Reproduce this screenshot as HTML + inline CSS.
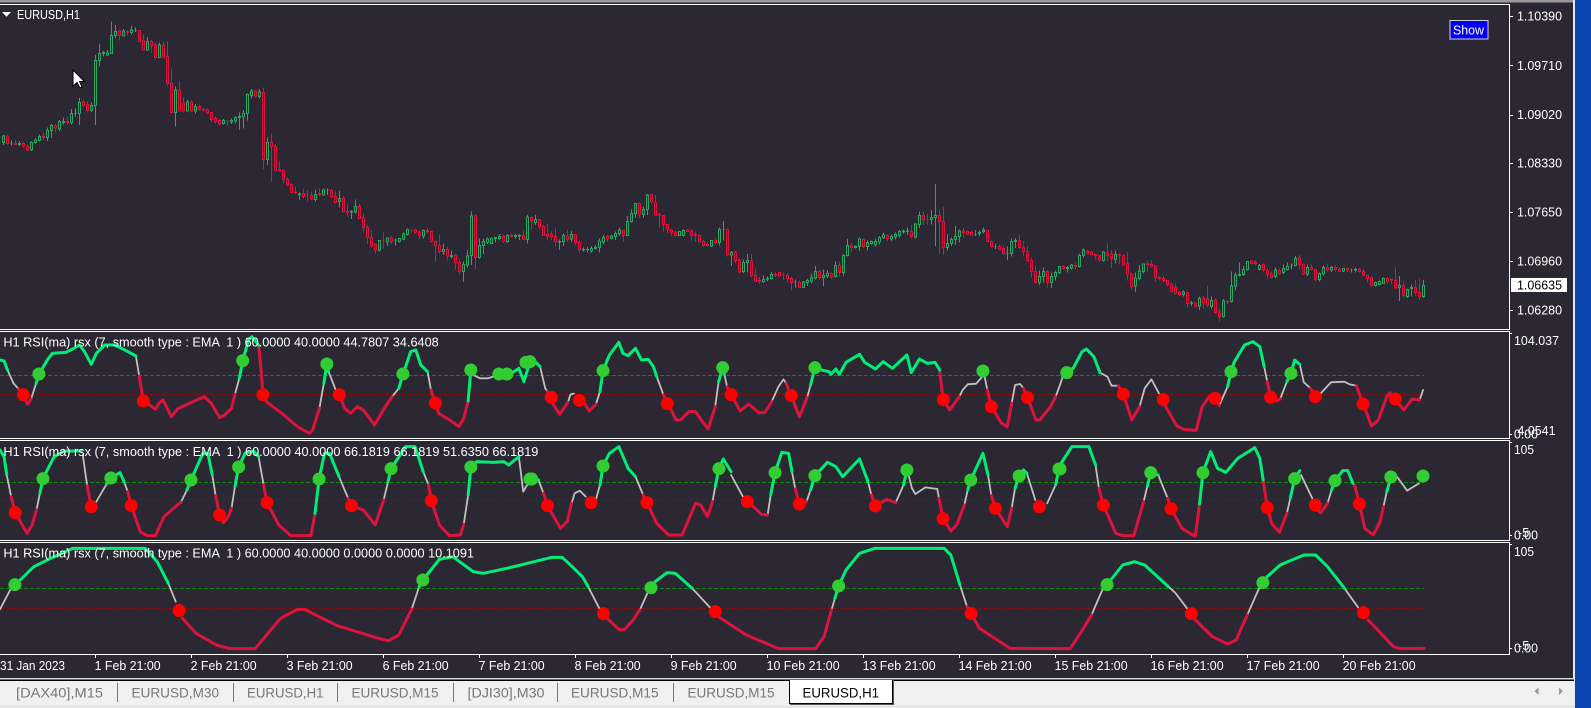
<!DOCTYPE html>
<html><head><meta charset="utf-8"><title>EURUSD,H1</title>
<style>
html,body{margin:0;padding:0;background:#2b2733;width:1591px;height:708px;overflow:hidden}
svg{display:block;position:absolute;left:0;top:0}
text{font-family:"Liberation Sans",sans-serif;font-size:12.6px;fill:#fff;white-space:pre}
.c path{fill:none;vector-effect:non-scaling-stroke;stroke-width:1;shape-rendering:crispEdges}
.G{stroke:#2ea663}.R{stroke:#e0103c}.B{stroke:#00e000}
.l path{fill:none;vector-effect:non-scaling-stroke;stroke-linejoin:round;stroke-linecap:round}
.l .g{stroke:#00ee76;stroke-width:3}
.l .r{stroke:#dc143c;stroke-width:3}
.l .w{stroke:#c0c0c0;stroke-width:1.8}
.l .dg{stroke:#32cd32;stroke-width:13}
.l .dr{stroke:#ff0000;stroke-width:13}
.t text{fill:#777;font-size:14px}
</style></head><body>
<svg width="1591" height="708" viewBox="0 0 1591 708" xmlns="http://www.w3.org/2000/svg">
<rect x="0" y="0" width="1591" height="708" fill="#2b2733"/>
<rect x="0" y="0" width="1574" height="2.5" fill="#9a9a9a"/>
<rect x="1574" y="0" width="17" height="708" fill="#0a47b2"/>
<rect x="1573" y="0" width="2" height="708" fill="#e8e8e8"/>

<!-- levels -->
<g stroke-width="1" shape-rendering="crispEdges" stroke-dasharray="4 2">
<path d="M0 375.5H1424M0 482.5H1424M0 588.5H1424" stroke="#0a8a0a"/>
<path d="M0 394.5H1424M0 499.5H1424M0 608.5H1424" stroke="#8b0a0a"/>
</g>

<!-- candles -->
<g class="c" transform="translate(3.5,0) scale(4,.33333)">
<path class="G" d="M0 405V408h-.25V428h.5V408H0M0 428V435M4 423V430h-.25V433h.5V430H4M4 433V438M7 425V428h-.25V450h.5V428H7M7 450V453M8 415V420h-.25V428h.5V420H8M8 428V430M9 403V409h-.25V422h.5V409H9M9 422V424M11 382V391h-.25V413h.5V391H11M11 413V423M12 372V376h-.25V391h.5V376H12M12 391V414M14 360V364h-.25V387h.5V364H14M14 387V393M15 353V365h-.25V368h.5V365H15M15 368V374M17 327V340h-.25V367h.5V340H17M17 367V374M19 294V307h-.25V340h.5V307H19M19 340V375M22 307V316h-.25V332h.5V316H22M22 332V336M23 165V181h-.25V316h.5V181H23M23 316V375M24 132V160h-.25V181h.5V160H24M24 181V200M25 153V157h-.25V160h.5V157H25M25 160V170M26 150V159h-.25V165h.5V159H26M26 165V168M27 64V106h-.25V160h.5V106H27M27 160V162M28 75V95h-.25V107h.5V95H28M28 107V116M30 87V93h-.25V108h.5V93H30M30 108V110M32 78V90h-.25V98h.5V90H32M32 98V103M33 82V91h-.25V91h.5V91H33M33 91V96M36 111V124h-.25V150h.5V124H36M36 150V153M39 127V135h-.25V173h.5V135H39M39 173V174M43 260V270h-.25V338h.5V270H43M43 338V380M46 298V306h-.25V333h.5V306H46M46 333V335M48 312V319h-.25V333h.5V319H48M48 333V340M55 357V361h-.25V371h.5V361H55M55 371V373M57 355V362h-.25V366h.5V362H57M57 366V372M58 350V353h-.25V363h.5V353H58M58 363V370M59 337V350h-.25V352h.5V350H59M59 352V390M60 330V341h-.25V351h.5V341H60M60 351V385M61 280V284h-.25V340h.5V284H61M61 340V362M62 267V273h-.25V286h.5V273H62M62 286V296M64 267V276h-.25V290h.5V276H64M64 290V296M66 412V428h-.25V478h.5V428H66M66 478V495M74 577V582h-.25V584h.5V582H74M74 584V600M78 568V584h-.25V598h.5V584H78M78 598V604M80 565V570h-.25V585h.5V570H80M80 585V587M81 565V570h-.25V570h.5V570H81M81 570V585M84 573V595h-.25V605h.5V595H84M84 605V622M87 630V634h-.25V636h.5V634H87M87 636V657M88 598V620h-.25V636h.5V620H88M88 636V640M94 720V722h-.25V750h.5V722H94M94 750V755M96 712V714h-.25V726h.5V714H96M96 726V738M99 715V716h-.25V724h.5V716H99M99 724V728M100 698V702h-.25V717h.5V702H100M100 717V720M101 685V688h-.25V703h.5V688H101M101 703V707M105 688V692h-.25V708h.5V692H105M105 708V715M110 730V748h-.25V755h.5V748H110M110 755V765M112 752V766h-.25V770h.5V766H112M112 770V775M115 785V794h-.25V815h.5V794H115M115 815V846M116 750V768h-.25V795h.5V768H116M116 795V802M117 634V648h-.25V767h.5V648H117M117 767V795M119 715V737h-.25V773h.5V737H119M119 773V776M120 715V725h-.25V736h.5V725H120M120 736V762M121 712V717h-.25V727h.5V717H121M121 727V732M122 713V715h-.25V730h.5V715H122M122 730V732M123 711V713h-.25V715h.5V713H123M123 715V728M124 702V710h-.25V715h.5V710H124M124 715V720M126 704V707h-.25V725h.5V707H126M126 725V729M128 702V706h-.25V709h.5V706H128M128 709V716M129 702V706h-.25V708h.5V706H129M129 708V720M131 645V651h-.25V718h.5V651H131M131 718V730"/>
<path class="R" d="M1 405V408h-.25V431h.5V408H1M1 431V433M3 420V431h-.25V433h.5V431H3M3 433V435M5 425V430h-.25V440h.5V430H5M5 440V443M6 433V440h-.25V450h.5V440H6M6 450V453M10 396V409h-.25V413h.5V409H10M10 413V422M13 372V376h-.25V384h.5V376H13M13 384V396M16 350V365h-.25V368h.5V365H16M16 368V373M20 298V306h-.25V317h.5V306H20M20 317V322M21 305V313h-.25V332h.5V313H21M21 332V338M29 88V93h-.25V107h.5V93H29M29 107V122M31 90V94h-.25V98h.5V94H31M31 98V105M34 90V91h-.25V124h.5V91H34M34 124V125M35 103V121h-.25V150h.5V121H35M35 150V152M37 120V124h-.25V136h.5V124H37M37 136V158M38 128V135h-.25V173h.5V135H38M38 173V176M40 124V136h-.25V171h.5V136H40M40 171V175M41 124V169h-.25V250h.5V169H41M41 250V258M42 205V250h-.25V338h.5V250H42M42 338V340M44 243V270h-.25V333h.5V270H44M44 333V335M45 292V309h-.25V333h.5V309H45M45 333V338M47 300V306h-.25V333h.5V306H47M47 333V338M49 313V320h-.25V328h.5V320H49M49 328V332M50 322V328h-.25V330h.5V328H50M50 330V335M51 325V330h-.25V339h.5V330H51M51 339V342M52 336V338h-.25V358h.5V338H52M52 358V366M53 350V355h-.25V364h.5V355H53M53 364V370M54 357V361h-.25V372h.5V361H54M54 372V375M56 360V365h-.25V365h.5V365H56M56 365V378M63 270V273h-.25V288h.5V273H63M63 288V292M65 262V277h-.25V478h.5V277H65M65 478V507M67 400V427h-.25V440h.5V427H67M67 440V545M68 432V440h-.25V510h.5V440H68M68 510V514M69 483V508h-.25V513h.5V508H69M69 513V515M70 511V512h-.25V539h.5V512H70M70 539V550M71 533V538h-.25V555h.5V538H71M71 555V558M72 550V554h-.25V577h.5V554H72M72 577V579M73 560V576h-.25V578h.5V576H73M73 578V582M75 565V580h-.25V590h.5V580H75M75 590V596M76 572V585h-.25V585h.5V585H76M76 585V605M77 575V586h-.25V597h.5V586H77M77 597V600M79 564V580h-.25V584h.5V580H79M79 584V590M82 567V571h-.25V591h.5V571H82M82 591V593M83 573V589h-.25V608h.5V589H83M83 608V610M85 588V594h-.25V635h.5V594H85M85 635V638M86 610V634h-.25V637h.5V634H86M86 637V650M89 610V620h-.25V655h.5V620H89M89 655V657M90 640V653h-.25V682h.5V653H90M90 682V696M91 675V683h-.25V712h.5V683H91M91 712V732M92 690V712h-.25V738h.5V712H92M92 738V742M93 730V733h-.25V750h.5V733H93M93 750V760M95 697V722h-.25V722h.5V722H95M95 722V745M97 710V714h-.25V724h.5V714H97M97 724V732M102 687V690h-.25V690h.5V690H102M102 690V700M103 686V690h-.25V698h.5V690H103M103 698V702M104 693V696h-.25V708h.5V696H104M104 708V717M106 684V692h-.25V694h.5V692H106M106 694V702M107 691V694h-.25V725h.5V694H107M107 725V728M108 722V724h-.25V737h.5V724H108M108 737V785M109 703V737h-.25V754h.5V737H109M109 754V760M111 740V748h-.25V768h.5V748H111M111 768V782M113 762V766h-.25V788h.5V766H113M113 788V808M114 778V788h-.25V815h.5V788H114M114 815V822M118 642V648h-.25V773h.5V648H118M118 773V807M125 704V708h-.25V725h.5V708H125M125 725V729M127 702V706h-.25V710h.5V706H127M127 710V713M130 692V706h-.25V718h.5V706H130M130 718V720"/>
<path class="B" d="M2 422V436M1.75 429h.5M18 325V350M17.75 340h.5M98 716V736M97.75 720h.5"/>
</g>
<g class="c" transform="translate(531.5,150) scale(4,.33333)">
<path class="G" d="M1 195V208h-.25V217h.5V208H1M1 217V225M7 268V275h-.25V276h.5V275H7M7 276V300M8 250V256h-.25V275h.5V256H8M8 275V288M10 243V253h-.25V267h.5V253H10M10 267V276M13 293V298h-.25V300h.5V298H13M13 300V305M14 291V298h-.25V299h.5V298H14M14 299V308M15 288V295h-.25V303h.5V295H15M15 303V308M16 285V293h-.25V296h.5V293H16M16 296V298M17 265V273h-.25V292h.5V273H17M17 292V308M18 255V262h-.25V276h.5V262H18M18 276V284M20 255V258h-.25V265h.5V258H20M20 265V268M21 245V250h-.25V260h.5V250H21M21 260V270M22 232V240h-.25V250h.5V240H22M22 250V258M24 198V214h-.25V257h.5V214H24M24 257V258M25 178V190h-.25V215h.5V190H25M25 215V218M26 159V160h-.25V190h.5V160H26M26 190V204M28 170V178h-.25V193h.5V178H28M28 193V204M29 132V135h-.25V178h.5V135H29M29 178V195M37 244V245h-.25V256h.5V245H37M37 256V258M38 238V241h-.25V257h.5V241H38M38 257V259M45 270V271h-.25V288h.5V271H45M45 288V291M47 232V238h-.25V277h.5V238H47M47 277V287M48 213V238h-.25V238h.5V238H48M48 238V272M50 303V307h-.25V315h.5V307H50M50 315V348M53 328V337h-.25V365h.5V337H53M53 365V369M54 312V332h-.25V338h.5V332H54M54 338V368M58 377V388h-.25V395h.5V388H58M58 395V399M59 380V385h-.25V387h.5V385H59M59 387V395M60 366V373h-.25V386h.5V373H60M60 386V388M66 388V396h-.25V396h.5V396H66M66 396V412M68 393V396h-.25V412h.5V396H68M68 412V414M69 387V392h-.25V398h.5V392H69M69 398V408M70 370V382h-.25V393h.5V382H70M70 393V400M71 348V364h-.25V384h.5V364H71M71 384V388M73 358V376h-.25V383h.5V376H73M73 383V408M74 360V371h-.25V378h.5V371H74M74 378V384M76 334V346h-.25V380h.5V346H76M76 380V383M78 312V316h-.25V368h.5V316H78M78 368V378M79 267V286h-.25V317h.5V286H79M79 317V320M81 287V290h-.25V292h.5V290H81M81 292V296M82 262V267h-.25V290h.5V267H82M82 290V303M84 272V278h-.25V290h.5V278H84M84 290V302M85 272V275h-.25V280h.5V275H85M85 280V283M86 265V275h-.25V285h.5V275H86M86 285V290M87 258V263h-.25V276h.5V263H87M87 276V284M88 248V255h-.25V263h.5V255H88M88 263V267M90 254V259h-.25V267h.5V259H90M90 267V273M91 248V253h-.25V261h.5V253H91M91 261V268M92 240V244h-.25V256h.5V244H92M92 256V262M93 238V243h-.25V246h.5V243H93M93 246V250M94 233V243h-.25V244h.5V243H94M94 244V255M96 220V222h-.25V261h.5V222H96M96 261V265M97 184V196h-.25V224h.5V196H97M97 224V234M100 180V202h-.25V209h.5V202H100M100 209V224M101 102V196h-.25V203h.5V196H101M101 203V288M104 252V280h-.25V292h.5V280H104M104 292V302M105 262V268h-.25V281h.5V268H105M105 281V288M106 228V259h-.25V268h.5V259H106M106 268V285M107 238V243h-.25V260h.5V243H107M107 260V278M111 240V253h-.25V253h.5V253H111M111 253V258M112 241V247h-.25V251h.5V247H112M112 251V258M113 232V240h-.25V244h.5V240H113M113 244V250M116 282V289h-.25V289h.5V289H116M116 289V297M119 290V311h-.25V311h.5V311H119M119 311V330M120 265V274h-.25V311h.5V274H120M120 311V320M121 264V271h-.25V274h.5V271H121M121 274V294M127 362V379h-.25V397h.5V379H127M127 397V405M128 352V364h-.25V380h.5V364H128M128 380V398M130 368V380h-.25V398h.5V380H130M130 398V414M131 362V368h-.25V380h.5V368H131M131 380V392M132 348V350h-.25V368h.5V350H132M132 368V372"/>
<path class="R" d="M0 200V203h-.25V215h.5V203H0M0 215V240M2 207V208h-.25V230h.5V208H2M2 230V235M3 225V228h-.25V256h.5V228H3M3 256V258M4 222V253h-.25V258h.5V253H4M4 258V270M5 245V253h-.25V260h.5V253H5M5 260V272M6 235V260h-.25V275h.5V260H6M6 275V290M9 240V258h-.25V268h.5V258H9M9 268V275M11 252V253h-.25V277h.5V253H11M11 277V285M12 272V277h-.25V299h.5V277H12M12 299V308M19 255V260h-.25V265h.5V260H19M19 265V275M23 240V241h-.25V257h.5V241H23M23 257V275M27 158V160h-.25V193h.5V160H27M27 193V204M30 133V134h-.25V155h.5V134H30M30 155V162M31 135V157h-.25V195h.5V157H31M31 195V197M32 190V192h-.25V195h.5V192H32M32 195V233M33 195V196h-.25V223h.5V196H33M33 223V245M34 222V224h-.25V240h.5V224H34M34 240V250M35 236V241h-.25V248h.5V241H35M35 248V258M36 243V246h-.25V257h.5V246H36M36 257V260M39 238V240h-.25V244h.5V240H39M39 244V246M40 238V243h-.25V255h.5V243H40M40 255V272M41 244V253h-.25V255h.5V253H41M41 255V275M42 254V256h-.25V275h.5V256H42M42 275V277M43 270V274h-.25V286h.5V274H43M43 286V291M44 277V284h-.25V286h.5V284H44M44 286V291M46 265V271h-.25V278h.5V271H46M46 278V283M49 236V238h-.25V315h.5V238H49M49 315V320M51 303V306h-.25V331h.5V306H51M51 331V340M52 325V331h-.25V366h.5V331H52M52 366V370M55 312V333h-.25V377h.5V333H55M55 377V383M56 355V376h-.25V394h.5V376H56M56 394V396M57 381V392h-.25V393h.5V392H57M57 393V402M61 367V373h-.25V376h.5V373H61M61 376V382M62 365V368h-.25V378h.5V368H62M62 378V380M63 368V375h-.25V375h.5V375H63M63 375V390M64 370V376h-.25V385h.5V376H64M64 385V398M65 380V385h-.25V397h.5V385H65M65 397V422M67 392V397h-.25V412h.5V397H67M67 412V414M72 358V364h-.25V383h.5V364H72M72 383V390M75 368V371h-.25V381h.5V371H75M75 381V386M77 335V346h-.25V368h.5V346H77M77 368V381M80 277V287h-.25V292h.5V287H80M80 292V306M83 266V268h-.25V290h.5V268H83M83 290V294M89 252V256h-.25V266h.5V256H89M89 266V273M95 225V244h-.25V260h.5V244H95M95 260V266M98 184V196h-.25V208h.5V196H98M98 208V225M99 190V208h-.25V208h.5V208H99M99 208V224M102 178V196h-.25V215h.5V196H102M102 215V312M103 171V214h-.25V292h.5V214H103M103 292V315M108 234V243h-.25V247h.5V243H108M108 247V262M109 242V245h-.25V252h.5V245H109M109 252V255M110 243V247h-.25V255h.5V247H110M110 255V258M114 240V241h-.25V275h.5V241H114M114 275V278M115 268V275h-.25V290h.5V275H115M115 290V292M117 283V289h-.25V297h.5V289H117M117 297V300M118 287V295h-.25V311h.5V295H118M118 311V315M122 255V272h-.25V293h.5V272H122M122 293V297M123 275V292h-.25V305h.5V292H123M123 305V320M124 288V305h-.25V333h.5V305H124M124 333V335M125 322V332h-.25V364h.5V332H125M125 364V384M126 347V364h-.25V397h.5V364H126M126 397V402M129 360V364h-.25V398h.5V364H129M129 398V412"/>
</g>
<g class="c" transform="translate(1063.5,150) scale(4,.33333)">
<path class="G" d="M1 348V352h-.25V356h.5V352H1M1 356V368M2 342V345h-.25V354h.5V345H2M2 354V358M4 310V316h-.25V350h.5V316H4M4 350V352M5 295V300h-.25V316h.5V300H5M5 316V322M10 303V306h-.25V332h.5V306H10M10 332V334M13 302V313h-.25V328h.5V313H13M13 328V340M18 368V384h-.25V408h.5V384H18M18 408V426M19 345V363h-.25V386h.5V363H19M19 386V392M20 340V342h-.25V364h.5V342H20M20 364V370M30 422V426h-.25V434h.5V426H30M30 434V440M32 453V459h-.25V460h.5V459H32M32 460V468M34 440V446h-.25V468h.5V446H34M34 468V480M37 440V451h-.25V470h.5V451H37M37 470V475M40 447V453h-.25V500h.5V453H40M40 500V502M42 365V408h-.25V455h.5V408H42M42 455V457M43 368V375h-.25V408h.5V375H43M43 408V422M44 338V373h-.25V376h.5V373H44M44 376V380M45 348V358h-.25V374h.5V358H45M45 374V378M46 333V335h-.25V359h.5V335H46M46 359V362M49 342V346h-.25V358h.5V346H49M49 358V362M53 353V360h-.25V380h.5V360H53M53 380V384M55 343V355h-.25V367h.5V355H55M55 367V372M56 338V349h-.25V358h.5V349H56M56 358V362M58 318V325h-.25V346h.5V325H58M58 346V350M61 344V352h-.25V372h.5V352H61M61 372V378M64 367V370h-.25V388h.5V370H64M64 388V394M65 347V352h-.25V372h.5V352H65M65 372V376M67 348V353h-.25V360h.5V353H67M67 360V366M70 355V356h-.25V363h.5V356H70M70 363V366M72 355V360h-.25V360h.5V360H72M72 360V368M73 353V359h-.25V360h.5V359H73M73 360V368M78 396V398h-.25V407h.5V398H78M78 407V410M79 392V395h-.25V403h.5V395H79M79 403V407M80 382V385h-.25V400h.5V385H80M80 400V402M84 378V407h-.25V413h.5V407H84M84 413V453M86 415V419h-.25V440h.5V419H86M86 440V444M87 404V412h-.25V415h.5V412H87M87 415V440M90 390V406h-.25V440h.5V406H90M90 440V444"/>
<path class="R" d="M0 347V350h-.25V356h.5V350H0M0 356V358M3 338V346h-.25V350h.5V346H3M3 350V360M6 300V303h-.25V309h.5V303H6M6 309V313M7 303V306h-.25V313h.5V306H7M7 313V316M8 310V313h-.25V316h.5V313H8M8 316V328M9 313V316h-.25V330h.5V316H9M9 330V335M11 280V309h-.25V316h.5V309H11M11 316V335M12 300V312h-.25V326h.5V312H12M12 326V354M14 310V314h-.25V315h.5V314H14M14 315V343M15 312V316h-.25V345h.5V316H15M15 345V348M16 306V340h-.25V372h.5V340H16M16 372V392M17 368V372h-.25V410h.5V372H17M17 410V418M21 332V342h-.25V343h.5V342H21M21 343V366M22 330V343h-.25V348h.5V343H22M22 348V352M23 345V348h-.25V382h.5V348H23M23 382V394M24 378V383h-.25V385h.5V383H24M24 385V392M25 378V385h-.25V392h.5V385H25M25 392V396M26 390V392h-.25V403h.5V392H26M26 403V410M27 400V401h-.25V424h.5V401H27M27 424V426M28 400V412h-.25V430h.5V412H28M28 430V434M29 423V427h-.25V434h.5V427H29M29 434V438M31 427V428h-.25V460h.5V428H31M31 460V472M33 456V459h-.25V468h.5V459H33M33 468V472M35 438V445h-.25V458h.5V445H35M35 458V475M36 408V447h-.25V465h.5V447H36M36 465V472M38 445V451h-.25V488h.5V451H38M38 488V490M39 474V486h-.25V500h.5V486H39M39 500V515M41 450V454h-.25V456h.5V454H41M41 456V462M47 330V333h-.25V340h.5V333H47M47 340V344M48 330V338h-.25V340h.5V338H48M48 340V346M50 340V343h-.25V360h.5V343H50M50 360V368M51 355V361h-.25V373h.5V361H51M51 373V386M52 365V372h-.25V382h.5V372H52M52 382V386M54 356V362h-.25V370h.5V362H54M54 370V375M59 315V322h-.25V344h.5V322H59M59 344V358M60 340V344h-.25V372h.5V344H60M60 372V375M62 342V352h-.25V358h.5V352H62M62 358V362M63 355V358h-.25V388h.5V358H63M63 388V394M66 340V353h-.25V360h.5V353H66M66 360V364M68 347V353h-.25V359h.5V353H68M68 359V364M69 352V358h-.25V364h.5V358H69M69 364V366M71 355V356h-.25V360h.5V356H71M71 360V366M74 354V358h-.25V364h.5V358H74M74 364V368M75 357V365h-.25V375h.5V365H75M75 375V380M76 375V377h-.25V385h.5V377H76M76 385V397M77 380V382h-.25V406h.5V382H77M77 406V408M81 381V385h-.25V394h.5V385H81M81 394V402M82 385V389h-.25V390h.5V389H82M82 390V404M83 352V392h-.25V414h.5V392H83M83 414V416M85 395V407h-.25V437h.5V407H85M85 437V442M88 390V413h-.25V428h.5V413H88M88 428V436M89 385V428h-.25V440h.5V428H89M89 440V450"/>
<path class="B" d="M57 340V358M56.75 347h.5"/>
</g>

<!-- indicator lines left -->
<g class="l" transform="translate(0,325) scale(.33801,.33333)">
<path class="w" d="M22 135 40 175 55 192M92 222 107 175M402 93 412 153M695 208 708 160M945 250 958 175M972 140 980 160 995 200M1160 215 1180 190M1265 140 1275 195M1400 150 1420 160 1445 160 1470 150M20 450 33 515M108 555 118 505M245 390 258 483M285 530 315 478M367 470 378 500M535 532 553 495M628 450 638 512M685 550 695 485M765 395 780 480M1003 455 1030 520M1135 525 1148 470M1252 440 1268 480M1372 598 1385 510M1535 395 1548 500 1565 470"/>
<path class="r" d="M55 192 70 215 82 238 92 222M412 153 422 215 440 238 460 253 470 235 482 225 490 240 507 275 525 252 550 240 575 228 605 215 625 235 650 278 665 270 685 250 695 208M765 60 772 130 778 210 790 232 830 262 880 305 915 325 925 315 945 250M1010 225 1020 250 1037 265 1057 245 1075 255 1108 300 1140 245 1160 215M1275 195 1285 230 1298 265 1330 285 1358 305 1372 280 1385 228M33 515 45 563 80 625 95 600 108 555M258 483 270 545M378 500 388 542 415 620 435 632 460 632 485 575 525 540 535 532M638 512 650 570 662 593 675 575 685 550M780 480 790 533 825 600 860 632 920 632 932 565M1030 520 1040 542 1075 555 1110 600 1135 525M1268 480 1276 527 1300 600 1330 632 1362 630 1372 598"/>
<path class="g" d="M0 105 12 108 22 135M107 175 115 148 140 105 155 85 195 82 215 72 235 60 250 80 270 118 285 85 310 60 340 60 375 78 402 93M708 160 718 108 735 45 745 35 765 60M958 175 967 118 972 140M1180 190 1192 147 1200 125 1215 80 1230 75 1245 120 1265 140M1385 228 1393 135M1510 147 1535 130 1550 170 1568 110M0 375 12 395 20 450M118 505 127 461 160 395 190 378 240 378M315 478 328 459 355 443 367 470M553 495 565 465 600 385 615 385 628 450M695 485 706 426 725 385 750 378 765 395M932 565 944 462 960 385 975 385 1003 455M1148 470 1157 431 1200 365 1228 365 1252 440M1385 510 1393 426 1410 410 1460 412 1490 410 1505 420 1535 395"/>
<path class="dg" d="M115 147h.01M718 107h.01M967 117h.01M1192 147h.01M1393 135h.01M1476 147h.01M1500 147h.01M1556 112h.01M127 461h.01M328 459h.01M565 465h.01M706 426h.01M944 462h.01M1157 431h.01M1393 426h.01M1568 462h.01"/>
<path class="dr" d="M69 209h.01M424 228h.01M778 209h.01M1004 209h.01M1288 234h.01M45 563h.01M270 545h.01M388 542h.01M650 570h.01M790 533h.01M1040 542h.01M1276 527h.01"/>
</g>
<!-- indicator lines middle -->
<g class="l" transform="translate(530,325) scale(.33801,.33333)">
<path class="w" d="M30 125 45 190 52 200M112 232 120 208 130 206M195 238 207 200M375 155 395 210M548 245 558 170M575 148 583 185M715 230 735 185 750 163 758 175M820 218 830 180M1270 215 1280 195 1295 178 1320 176 1338 155M1345 155 1353 195M1425 235 1435 180 1450 177 1460 190M1555 215 1568 180M25 465 40 505M123 535 132 505 147 497 165 515M195 523 207 480M312 455 335 510M540 530 548 485M595 450 630 515M703 570 712 510M775 440 785 492M818 530 830 495M1000 470 1010 510M1082 533 1105 480M1120 450 1130 490 1140 507 1170 487 1205 492 1210 520M1285 540 1295 495M1355 450 1365 512M1425 550 1435 490M1470 445 1495 525M1530 535 1555 480"/>
<path class="r" d="M52 200 70 240 88 268 112 232M150 215 175 258 195 238M395 210 415 250 432 285 445 285 470 260 490 260 510 290 527 312 548 245M583 185 595 209 622 258 647 237 678 264 695 262 715 230M758 175 773 212 797 275 820 218M1212 135 1222 225 1242 255 1270 215M1353 195 1365 245 1395 295 1412 305 1425 235M1460 190 1472 218 1497 285 1508 285 1540 245 1555 215M40 505 52 542 90 610 110 590 123 535M335 510 346 533 375 595 410 630 450 630 490 535 505 540 525 575 540 530M650 535 685 568 703 570M785 492 797 537 818 530M1010 510 1022 543 1055 523 1082 533M1210 520 1222 581 1245 618 1262 600 1285 540M1365 512 1377 550 1412 605 1425 550"/>
<path class="g" d="M0 110 10 105 30 125M207 200 216 137 235 90 263 52 275 85 290 92 312 70 330 105 350 103 365 125 375 155M558 170 570 128 575 148M830 180 843 128 862 135 885 140 890 148 905 132 915 148 935 112 975 88 990 112 1022 132 1045 110 1072 130 1115 90 1128 143 1152 102 1175 115 1198 112 1212 135M5 455 25 465M207 480 216 423 235 385 263 365 290 430 312 455M548 485 559 431 572 402 595 440M712 510 725 443 745 382 765 385 775 440M830 495 843 452 880 412 905 425 925 455 975 402 1000 470M1105 480 1115 435M1295 495 1304 465 1340 385 1355 450M1435 490 1447 453 1460 435 1470 445M1555 480 1565 432"/>
<path class="dg" d="M0 110h.01M216 137h.01M570 128h.01M843 128h.01M1340 138h.01M5 462h.01M216 423h.01M559 431h.01M725 443h.01M843 452h.01M1115 435h.01M1304 465h.01M1447 453h.01M1565 432h.01"/>
<path class="dr" d="M63 217h.01M146 226h.01M406 236h.01M595 209h.01M773 212h.01M1223 224h.01M1365 245h.01M1472 218h.01M52 542h.01M181 533h.01M346 533h.01M643 530h.01M797 537h.01M1022 543h.01M1222 581h.01M1377 550h.01M1507 545h.01"/>
</g>
<!-- indicator lines right -->
<g class="l" transform="translate(1060,325) scale(.33865,.33333)">
<path class="w" d="M0 180 8 155M118 143 140 155 152 182 172 182M235 245 250 190 270 163 292 205M470 242 495 185M603 125 612 170M650 222 670 170M708 118 720 172 740 190M770 205 800 172 840 170 855 178 875 182M1062 225 1072 195M105 420 115 490M247 530 258 483M290 450 318 520M670 565 680 520M712 450 745 520M790 535 802 495M955 545 965 500M995 455 1025 497 1060 475"/>
<path class="r" d="M172 182 187 208 212 285 235 245M312 245 345 303 365 313 402 316 420 245 440 215 458 220 470 242M612 170 622 217 640 228 650 222M740 190 754 215M875 182 895 237 920 303 940 285 965 215 975 203M1000 235 1015 255 1040 222 1062 225M115 490 128 540 165 625 185 632 218 632 247 530M318 520 328 551 360 610 395 632 400 632 412 537M600 465 612 548 625 595 648 622 670 565M760 555 770 563 790 535M870 480 884 537 900 610 925 630 945 590 955 545"/>
<path class="g" d="M8 155 40 128 65 80 78 72 100 95 118 143M495 185 505 140 515 110 545 60 570 50 590 65 603 125M670 170 682 145 693 105 708 118M0 420 35 365 85 365 105 420M258 483 268 443 290 450M412 537 422 443 445 380 465 430 490 442 525 400 575 368 590 400 600 465M680 520 693 461 708 437M802 495 812 467 835 437 850 437 865 475M965 500 977 456"/>
<path class="dg" d="M20 143h.01M505 140h.01M682 145h.01M0 432h.01M268 443h.01M422 443h.01M693 461h.01M812 467h.01M977 456h.01M1072 453h.01"/>
<path class="dr" d="M187 208h.01M305 224h.01M458 220h.01M622 217h.01M754 215h.01M895 237h.01M990 222h.01M128 540h.01M328 551h.01M612 548h.01M754 540h.01M884 537h.01"/>
</g>
<!-- sub 3 -->
<g class="l" transform="translate(0,530) scale(.33801,.33333)">
<path class="w" d="M0 238 30 180M498 160 520 215M1218 238 1240 170"/>
<path class="r" d="M540 265 580 310 640 345 680 356 755 356 830 265 880 238 900 238 1000 288 1130 328 1150 332 1180 315 1218 238"/>
<path class="g" d="M50 160 100 110 150 85 215 55 430 55 465 95 498 160M1240 170 1251 150 1300 88 1340 80 1400 125 1430 130 1500 115 1568 98"/>
<path class="dg" d="M44 164h.01M1251 150h.01"/><path class="dr" d="M530 242h.01"/>
</g>
<g class="l" transform="translate(530,530) scale(.33801,.33333)">
<path class="w" d="M172 170 205 235M325 240 347 190M480 175 535 235M892 240 902 205M1272 165 1293 230"/>
<path class="r" d="M228 265 265 300 280 298 305 270 325 240M560 262 640 315 735 356 845 356 870 320 892 240M1293 230 1305 251 1330 295 1420 355 1568 356"/>
<path class="g" d="M0 98 65 82 95 82 125 110 155 140 172 170M370 155 405 128 430 130 480 175M902 205 913 168 935 120 975 70 1020 55 1225 55 1245 75 1272 165"/>
<path class="dg" d="M358 173h.01M913 168h.01"/><path class="dr" d="M217 251h.01M548 245h.01M1305 251h.01"/>
</g>
<g class="l" transform="translate(1060,530) scale(.33865,.33333)">
<path class="w" d="M93 255 127 175M320 170 340 188 375 235M553 255 590 170M840 175 880 232"/>
<path class="r" d="M0 356 30 356 60 310 93 255M400 270 450 320 495 342 520 330 553 255M910 270 985 350 1005 356 1075 355"/>
<path class="g" d="M150 150 185 105 220 95 250 105 320 170M612 140 650 105 720 75 755 75 790 110 840 175"/>
<path class="dg" d="M139 164h.01M599 158h.01"/><path class="dr" d="M388 251h.01M896 248h.01"/>
</g>

<!-- panel frames -->
<g fill="none" stroke="#fff" stroke-width="1" shape-rendering="crispEdges">
<path d="M0 4.5H1509.5V329.5H0"/>
<path d="M0 331.5H1509.5V438.5H0"/>
<path d="M0 440.5H1509.5V540.5H0"/>
<path d="M0 542.5H1509.5V654.5H0"/>
<path d="M1510 16.5h3M1510 65.5h3M1510 115.5h3M1510 163.5h3M1510 212.5h3M1510 261.5h3M1510 310.5h3M1510 333.5h2M1510 434.5h2M1510 442.5h2M1510 535.5h2M1510 544.5h2M1510 648.5h2"/>
<path d="M95.5 654V658M191.5 654V658M287.5 654V658M383.5 654V658M479.5 654V658M575.5 654V658M671.5 654V658M767.5 654V658M863.5 654V658M959.5 654V658M1055.5 654V658M1151.5 654V658M1247.5 654V658M1343.5 654V658"/>
</g>

<!-- chart text -->
<path d="M2 12H11L6.5 16.7Z" fill="#fff"/>
<text x="17" y="19" textLength="63" lengthAdjust="spacingAndGlyphs">EURUSD,H1</text>
<g>
<text x="1517" y="20.5" textLength="45" lengthAdjust="spacingAndGlyphs">1.10390</text>
<text x="1517" y="70" textLength="45" lengthAdjust="spacingAndGlyphs">1.09710</text>
<text x="1517" y="119" textLength="45" lengthAdjust="spacingAndGlyphs">1.09020</text>
<text x="1517" y="167.5" textLength="45" lengthAdjust="spacingAndGlyphs">1.08330</text>
<text x="1517" y="216.5" textLength="45" lengthAdjust="spacingAndGlyphs">1.07650</text>
<text x="1517" y="265.5" textLength="45" lengthAdjust="spacingAndGlyphs">1.06960</text>
<text x="1517" y="314.5" textLength="45" lengthAdjust="spacingAndGlyphs">1.06280</text>
<rect x="1511" y="278" width="56" height="14" fill="#fff"/>
<text x="1517" y="289.5" textLength="45" lengthAdjust="spacingAndGlyphs" style="fill:#000">1.06635</text>
<text x="1514" y="345" textLength="45" lengthAdjust="spacingAndGlyphs">104.037</text>
<text x="1517.5" y="435" textLength="38" lengthAdjust="spacingAndGlyphs">4.0541</text>
<text x="1514" y="438.5" textLength="24" lengthAdjust="spacingAndGlyphs">0.00</text>
<text x="1514" y="454" textLength="20" lengthAdjust="spacingAndGlyphs">105</text>
<text x="1518" y="537">-5</text>
<text x="1514" y="539.5" textLength="24" lengthAdjust="spacingAndGlyphs">0.00</text>
<text x="1514" y="556" textLength="20" lengthAdjust="spacingAndGlyphs">105</text>
<text x="1518" y="650">-5</text>
<text x="1514" y="652.5" textLength="24" lengthAdjust="spacingAndGlyphs">0.00</text>
</g>
<text x="3.4" y="346.5" textLength="435.3" lengthAdjust="spacingAndGlyphs">H1 RSI(ma) rsx (7, smooth type : EMA  1 ) 60.0000 40.0000 44.7807 34.6408</text>
<text x="3.4" y="456" textLength="535" lengthAdjust="spacingAndGlyphs">H1 RSI(ma) rsx (7, smooth type : EMA  1 ) 60.0000 40.0000 66.1819 66.1819 51.6350 66.1819</text>
<text x="3.4" y="557.5" textLength="470.6" lengthAdjust="spacingAndGlyphs">H1 RSI(ma) rsx (7, smooth type : EMA  1 ) 60.0000 40.0000 0.0000 0.0000 10.1091</text>
<g>
<text x="0" y="670" textLength="65" lengthAdjust="spacingAndGlyphs">31 Jan 2023</text>
<text x="94.6" y="670" textLength="66" lengthAdjust="spacingAndGlyphs">1 Feb 21:00</text>
<text x="190.6" y="670" textLength="66" lengthAdjust="spacingAndGlyphs">2 Feb 21:00</text>
<text x="286.6" y="670" textLength="66" lengthAdjust="spacingAndGlyphs">3 Feb 21:00</text>
<text x="382.6" y="670" textLength="66" lengthAdjust="spacingAndGlyphs">6 Feb 21:00</text>
<text x="478.6" y="670" textLength="66" lengthAdjust="spacingAndGlyphs">7 Feb 21:00</text>
<text x="574.6" y="670" textLength="66" lengthAdjust="spacingAndGlyphs">8 Feb 21:00</text>
<text x="670.6" y="670" textLength="66" lengthAdjust="spacingAndGlyphs">9 Feb 21:00</text>
<text x="766.6" y="670" textLength="73" lengthAdjust="spacingAndGlyphs">10 Feb 21:00</text>
<text x="862.6" y="670" textLength="73" lengthAdjust="spacingAndGlyphs">13 Feb 21:00</text>
<text x="958.6" y="670" textLength="73" lengthAdjust="spacingAndGlyphs">14 Feb 21:00</text>
<text x="1054.6" y="670" textLength="73" lengthAdjust="spacingAndGlyphs">15 Feb 21:00</text>
<text x="1150.6" y="670" textLength="73" lengthAdjust="spacingAndGlyphs">16 Feb 21:00</text>
<text x="1246.6" y="670" textLength="73" lengthAdjust="spacingAndGlyphs">17 Feb 21:00</text>
<text x="1342.6" y="670" textLength="73" lengthAdjust="spacingAndGlyphs">20 Feb 21:00</text>
</g>

<!-- Show button -->
<rect x="1450" y="20.5" width="38" height="18.5" fill="#0000ee" stroke="#d0d0d0" stroke-width="1" shape-rendering="crispEdges"/>
<text x="1453" y="34.5" textLength="31" lengthAdjust="spacingAndGlyphs">Show</text>

<!-- cursor -->
<path d="M73 70V86L77 82.5 80 88 82 87 79.5 81.5H84.5Z" fill="#fff" stroke="#000" stroke-width="1"/>

<!-- tab bar -->
<rect x="0" y="678" width="1574" height="1.5" fill="#dcdcdc"/>
<rect x="0" y="679.5" width="1574" height="1.5" fill="#000"/>
<rect x="0" y="681" width="1574" height="24" fill="#f0f0f0"/>
<rect x="0" y="705" width="1574" height="3" fill="#e6e6e6"/>
<path d="M117.5 683V702M233.5 683V702M337.5 683V702M453.5 683V702M557.5 683V702M673.5 683V702" stroke="#777" stroke-width="1" shape-rendering="crispEdges"/>
<g class="t">
<text x="16" y="697.5" textLength="87" lengthAdjust="spacingAndGlyphs">[DAX40],M15</text>
<text x="131.5" y="697.5" textLength="87.5" lengthAdjust="spacingAndGlyphs">EURUSD,M30</text>
<text x="247" y="697.5" textLength="76.5" lengthAdjust="spacingAndGlyphs">EURUSD,H1</text>
<text x="351.5" y="697.5" textLength="87" lengthAdjust="spacingAndGlyphs">EURUSD,M15</text>
<text x="467.5" y="697.5" textLength="77" lengthAdjust="spacingAndGlyphs">[DJI30],M30</text>
<text x="571" y="697.5" textLength="87.5" lengthAdjust="spacingAndGlyphs">EURUSD,M15</text>
<text x="687.5" y="697.5" textLength="87" lengthAdjust="spacingAndGlyphs">EURUSD,M15</text>
</g>
<rect x="789.5" y="680" width="103" height="24" fill="#fff"/>
<path d="M789.5 680V703.5H892.5V680" fill="none" stroke="#000" stroke-width="1" shape-rendering="crispEdges"/>
<path d="M790 704.5H893.5V680" fill="none" stroke="#555" stroke-width="1" shape-rendering="crispEdges"/>
<text x="802.5" y="697.5" textLength="76.5" lengthAdjust="spacingAndGlyphs" style="fill:#000;font-size:14px">EURUSD,H1</text>
<path d="M1538.5 687.5V695L1534.5 691.3ZM1559 687.5V695L1563 691.3Z" fill="#999"/>
</svg>
</body></html>
